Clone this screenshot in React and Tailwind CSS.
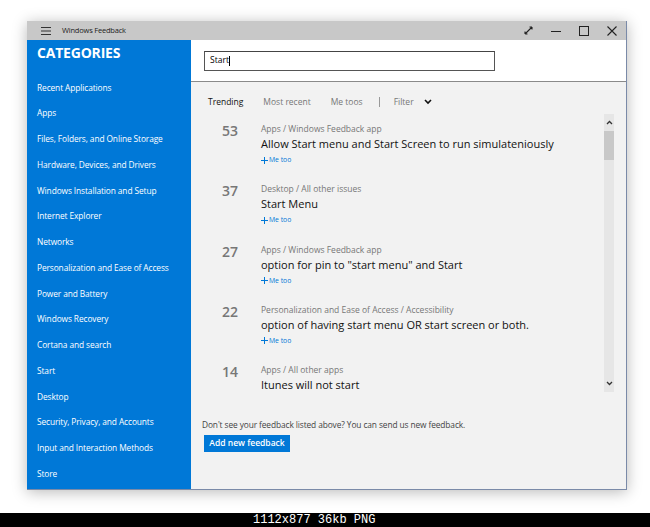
import React from "react";

const cats = [
  "Recent Applications",
  "Apps",
  "Files, Folders, and Online Storage",
  "Hardware, Devices, and Drivers",
  "Windows Installation and Setup",
  "Internet Explorer",
  "Networks",
  "Personalization and Ease of Access",
  "Power and Battery",
  "Windows Recovery",
  "Cortana and search",
  "Start",
  "Desktop",
  "Security, Privacy, and Accounts",
  "Input and Interaction Methods",
  "Store",
];

const items = [
  { n: "53", c: "Apps / Windows Feedback app", t: "Allow Start menu and Start Screen to run simulateniously", me: true },
  { n: "37", c: "Desktop / All other issues", t: "Start Menu", me: true },
  { n: "27", c: "Apps / Windows Feedback app", t: 'option for pin to "start menu" and Start', me: true },
  { n: "22", c: "Personalization and Ease of Access / Accessibility", t: "option of having start menu OR start screen or both.", me: true },
  { n: "14", c: "Apps / All other apps", t: "Itunes will not start", me: false },
];

export default function App() {
  return (
    <div className="w-[650px] h-[527px] bg-white flex flex-col overflow-hidden" style={{ fontFamily: "'Open Sans', 'Noto Sans', sans-serif" }}>
      <div className="pl-[27px] pt-[21px] h-[513px]">
        <div className="w-[600px] h-[469px] flex flex-col border-r border-b border-[#7a8aa8] shadow-[0_2px_14px_rgba(0,0,0,0.28)]">
          {/* title bar */}
          <div className="h-[19px] bg-[#c8c8c8] flex items-center text-[#222]">
            <div className="w-[35px] flex justify-center pl-[2px]">
              <svg width="10" height="8" viewBox="0 0 10 8"><path d="M0 0.5H10M0 4H10M0 7.5H10" stroke="#333" strokeWidth="1" /></svg>
            </div>
            <span className="text-[7.5px] tracking-[-0.2px]">Windows Feedback</span>
            <div className="ml-auto flex items-center h-full">
              <div className="w-[28px] flex justify-center">
                <svg width="9" height="9" viewBox="0 0 9 9"><path d="M1 8L8 1M1 8V5.5M1 8H3.5M8 1V3.5M8 1H5.5" stroke="#222" strokeWidth="1.1" fill="none" /></svg>
              </div>
              <div className="w-[28px] flex justify-center">
                <svg width="10" height="10" viewBox="0 0 10 10"><path d="M0 5.5H10" stroke="#222" strokeWidth="1" /></svg>
              </div>
              <div className="w-[28px] flex justify-center">
                <svg width="10" height="10" viewBox="0 0 10 10"><rect x="0.5" y="0.5" width="9" height="9" stroke="#222" strokeWidth="1" fill="none" /></svg>
              </div>
              <div className="w-[28px] flex justify-center pr-[1px]">
                <svg width="10" height="10" viewBox="0 0 10 10"><path d="M0.5 0.5L9.5 9.5M9.5 0.5L0.5 9.5" stroke="#222" strokeWidth="1.1" /></svg>
              </div>
            </div>
          </div>
          <div className="flex flex-1 min-h-0">
            {/* sidebar */}
            <div className="w-[164px] bg-[#0078d7] text-white pl-[10px]">
              <div className="mt-[0px] text-[14px] font-bold leading-[26px] tracking-[-0.2px]">CATEGORIES</div>
              <div className="mt-[9px] flex flex-col">
                {cats.map((c) => (
                  <div key={c} className="h-[25.75px] flex items-center text-[8.35px] leading-none tracking-[-0.1px]">{c}</div>
                ))}
              </div>
            </div>
            {/* main */}
            <div className="flex-1 flex flex-col bg-[#f2f2f2]">
              <div className="h-[42px] bg-white border-b border-[#8a8a8a] flex items-center pl-[13px]">
                <div className="w-[291px] h-[20px] border border-[#555] border-t-[#444] flex items-center pl-[5px] text-[8.5px] text-black">
                  Start<span className="w-px h-[10px] bg-black" />
                </div>
              </div>
              <div className="flex items-center h-[32px] pt-[8px] pl-[17px] text-[8.5px] text-[#777]">
                <span className="text-[#111] font-medium">Trending</span>
                <span className="ml-[20px]">Most recent</span>
                <span className="ml-[20px]">Me toos</span>
                <span className="ml-[16px] w-px h-[10px] bg-[#999]" />
                <span className="ml-[14px]">Filter</span>
                <svg className="ml-[10px]" width="8" height="6" viewBox="0 0 8 6"><path d="M1 1L4 4L7 1" stroke="#111" strokeWidth="1.6" fill="none" /></svg>
              </div>
              <div className="flex pr-[12px] h-[278px] overflow-hidden">
                <div className="flex-1 flex flex-col pt-[7px]">
                  {items.map((it) => (
                    <div key={it.n} className="h-[60.3px] shrink-0 flex">
                      <div className="w-[70px] pl-[31px] text-[14px] font-semibold text-[#777] leading-[20px]">{it.n}</div>
                      <div className="flex flex-col">
                        <div className="text-[8.5px] text-[#777] leading-[14px] pt-[1px]">{it.c}</div>
                        <div className="text-[11px] text-[#111] leading-[15px]">{it.t}</div>
                        {it.me && (
                          <div className="flex items-center text-[6.8px] text-[#0078d7] mt-[4px] leading-[10px]">
                            <svg width="7" height="7" viewBox="0 0 7 7"><path d="M3.5 0V7M0 3.5H7" stroke="#0078d7" strokeWidth="1" /></svg>
                            <span className="ml-[1px]">Me too</span>
                          </div>
                        )}
                      </div>
                    </div>
                  ))}
                </div>
                <div className="w-[10px] h-[278px] bg-[#e6e6e6] flex flex-col items-center">
                  <div className="h-[17px] flex items-center justify-center">
                    <svg width="7" height="5" viewBox="0 0 7 5"><path d="M1 4L3.5 1.5L6 4" stroke="#333" strokeWidth="1.3" fill="none" /></svg>
                  </div>
                  <div className="w-full h-[29px] bg-[#c8c8c8]" />
                  <div className="mt-auto h-[17px] flex items-center justify-center">
                    <svg width="7" height="5" viewBox="0 0 7 5"><path d="M1 1L3.5 3.5L6 1" stroke="#333" strokeWidth="1.3" fill="none" /></svg>
                  </div>
                </div>
              </div>
              <div className="pl-[11px] mt-[27px] text-[8.35px] text-[#444] leading-[12px] tracking-[-0.1px]">
                Don&apos;t see your feedback listed above? You can send us new feedback.
              </div>
              <div className="pl-[13px] mt-[4px]">
                <div className="w-[86px] h-[17px] bg-[#0078d7] text-white text-[8.5px] font-semibold flex items-center justify-center">Add new feedback</div>
              </div>
            </div>
          </div>
        </div>
      </div>
      <div className="h-[14px] bg-black text-white pl-[253px] text-[12px] leading-[14px]" style={{ fontFamily: "'Liberation Mono', monospace" }}>
        1112x877 36kb PNG
      </div>
    </div>
  );
}
